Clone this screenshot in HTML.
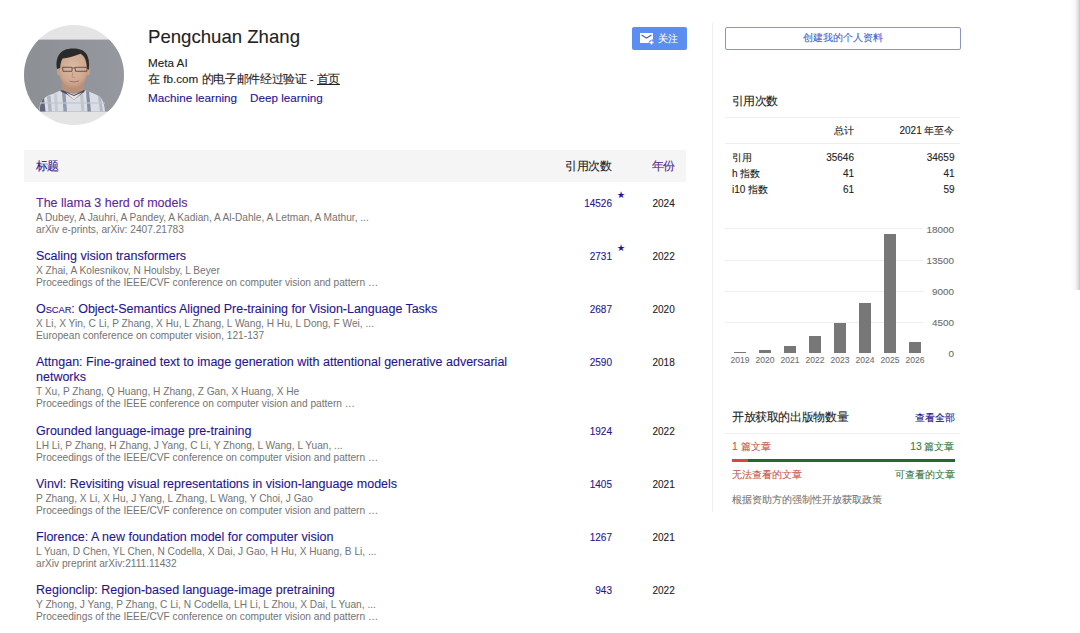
<!DOCTYPE html>
<html><head><meta charset="utf-8">
<style>
html,body{margin:0;padding:0;background:#fff;}
body{width:1080px;height:633px;overflow:hidden;position:relative;font-family:"Liberation Sans",sans-serif;color:#222;-webkit-text-stroke:0.1px currentColor;}
.a{position:absolute;white-space:nowrap;}
.lnk{color:#1f168f;}
.vis{color:#5c2896;}
.t{font-size:12.5px;line-height:15px;}
.sc{font-size:9.3px;}
.g{font-size:10.16px;line-height:12px;color:#737373;-webkit-text-stroke:0;}
.num{font-size:10px;line-height:12px;text-align:right;}
.yr{font-size:10px;line-height:12px;color:#222;}
.star{font-size:9px;line-height:10px;color:#1f168f;}
.ylab{font-size:9.9px;line-height:12px;color:#6c6c6c;text-align:right;}
.xlab{font-size:9.6px;line-height:12px;color:#707070;text-align:center;transform:scaleX(0.89);}
.rt{font-size:10px;line-height:12px;color:#222;}
</style></head><body>
<div class="a" style="left:23.6px;top:24.5px;width:100px;height:100px;border-radius:50%;overflow:hidden;">
<svg width="100" height="100" viewBox="0 0 100 100" style="display:block">
<defs><linearGradient id="bg" x1="0" y1="0" x2="1" y2="0"><stop offset="0" stop-color="#8c8f94"/><stop offset="1" stop-color="#95989e"/></linearGradient>
<radialGradient id="face" cx="0.5" cy="0.42" r="0.62"><stop offset="0" stop-color="#dcbaa4"/><stop offset="0.7" stop-color="#cfa78f"/><stop offset="1" stop-color="#b28a74"/></radialGradient></defs>
<rect width="100" height="100" fill="#e4e4e4"/>
<rect x="0" y="14.6" width="100" height="72" fill="url(#bg)"/>
<path d="M15 86.6 C15.5 78 18 72.5 27 69.5 C31 68 34 66.5 37 65.5 L50 69 L62 65.5 C66 67 70 68.5 73 70 C79 73 80.5 79 81 86.6 Z" fill="#dadde3"/>
<path d="M15.5 86.6 C16 80 17 76 20 73 L21.5 86.6 Z" fill="#5f677c"/>
<path d="M23 71.5 L24.5 86.6 L28 86.6 L26.5 70.5 Z" fill="#b0b6c4"/>
<path d="M30 69 L31 86.6 L34 86.6 L33 68 Z" fill="#c6cad4"/>
<path d="M38 67 L39.5 86.6 L43 86.6 L41.5 68 Z" fill="#9199ae"/>
<path d="M56 69 L57.5 86.6 L60.5 86.6 L59 68 Z" fill="#c0c5d0"/>
<path d="M62 66 L63.5 86.6 L67 86.6 L65 66.5 Z" fill="#848da3"/>
<path d="M74 71 L76 86.6 L79 86.6 L77 72.5 Z" fill="#b3b9c7"/>
<path d="M16 77 L81 77 L81 79 L16 79 Z" fill="#c3c7d1" opacity="0.6"/>
<rect x="38" y="53" width="22" height="15" fill="#b88f77"/>
<path d="M36 66 L44 70 L50 75 L56 70 L61 66 L60 65 L50 70 L38 65 Z" fill="#434b63"/>
<path d="M42 67.5 L50 75 L58 67.5 L50 71 Z" fill="#ebe4dc"/>
<ellipse cx="35.2" cy="46" rx="2.2" ry="4.5" fill="#c9a089"/>
<ellipse cx="63.8" cy="46" rx="2.2" ry="4.5" fill="#c9a089"/>
<path d="M34.5 40 C34.5 55 40 63.5 49.5 63.5 C59 63.5 64 55 64 40 C64 30 58 26.5 49.5 26.5 C41 26.5 34.5 30 34.5 40 Z" fill="url(#face)"/>
<path d="M33 44 C31 32 36 23.5 49 23.5 C61 23.5 66.5 29.5 64.8 45 L63 43.5 C62.5 35 60.5 31 56.5 28.8 C50 31.5 43 33 38.5 33.5 C37 36.5 36.2 40 36.2 43 Z" fill="#2b2a2a"/>
<path d="M38.5 42.3 H48 V46.3 H39 Z M51 42.3 H63.2 L62.8 46.3 H51.5 Z" fill="none" stroke="#4e3e38" stroke-width="0.8"/>
<path d="M48 43 L51 43" stroke="#4e3e38" stroke-width="0.7"/>
<path d="M45.5 56.2 Q50 57.8 55 56" stroke="#9e6e5c" stroke-width="0.9" fill="none"/>
<path d="M49 47 L48 52 L51 52.5" stroke="#b58a74" stroke-width="0.7" fill="none"/>
</svg>
</div>
<div class="a" style="left:148px;top:25.5px;font-size:18.6px;line-height:22px;color:#222;">Pengchuan Zhang</div>
<div class="a" style="left:148px;top:56px;font-size:11.7px;line-height:14px;color:#222;">Meta AI</div>
<div class="a" style="left:148px;top:72px;font-size:11.7px;line-height:14px;color:#222;">在 fb.com <span style="letter-spacing:-0.34px">的电子邮件经过验证</span> - <span style="text-decoration:underline;letter-spacing:-0.5px">首页</span></div>
<div class="a lnk" style="left:148px;top:91px;font-size:11.7px;line-height:14px;">Machine learning</div>
<div class="a lnk" style="left:250px;top:91px;font-size:11.7px;line-height:14px;">Deep learning</div>

<div class="a" style="left:632px;top:27px;width:55px;height:23px;background:#5b8ef0;border-radius:2px;"></div>
<svg class="a" style="left:639px;top:32px" width="16" height="13" viewBox="0 0 16 13">
<path d="M1 1 H14 V7.5 A4 4 0 0 0 9.5 11 H1 Z" fill="#fff"/>
<path d="M2.5 3 L7.5 6 L12.5 3" stroke="#4a60c0" stroke-width="1.1" fill="none"/>
<path d="M12.5 8.5 V12.5 M10.5 10.5 H14.5" stroke="#fff" stroke-width="1.3"/>
</svg>
<div class="a" style="left:658px;top:32px;font-size:9.8px;line-height:13px;color:#fff;">关注</div>

<div class="a" style="left:24px;top:150px;width:662px;height:32px;background:#f5f5f5;"></div>
<div class="a lnk" style="left:36px;top:159px;font-size:11.6px;line-height:14px;letter-spacing:-0.8px;">标题</div>
<div class="a" style="left:565px;top:159px;font-size:11.6px;line-height:14px;color:#222;letter-spacing:-0.4px;">引用次数</div>
<div class="a vis" style="left:652px;top:159px;font-size:11.6px;line-height:14px;letter-spacing:-1.5px;">年份</div>

<div class="a t vis" style="left:36px;top:196px">The llama 3 herd of models</div>
<div class="a g" style="left:36px;top:212px">A Dubey, A Jauhri, A Pandey, A Kadian, A Al-Dahle, A Letman, A Mathur, ...</div>
<div class="a g" style="left:36px;top:224px">arXiv e-prints, arXiv: 2407.21783</div>
<div class="a num lnk" style="left:552px;width:60px;top:198px">14526</div>
<div class="a star" style="left:617px;top:190px">★</div>
<div class="a yr" style="left:652.5px;top:198px">2024</div>
<div class="a t lnk" style="left:36px;top:249px">Scaling vision transformers</div>
<div class="a g" style="left:36px;top:265px">X Zhai, A Kolesnikov, N Houlsby, L Beyer</div>
<div class="a g" style="left:36px;top:277px">Proceedings of the IEEE/CVF conference on computer vision and pattern …</div>
<div class="a num lnk" style="left:552px;width:60px;top:251px">2731</div>
<div class="a star" style="left:617px;top:243px">★</div>
<div class="a yr" style="left:652.5px;top:251px">2022</div>
<div class="a t lnk" style="left:36px;top:302px"><span style="letter-spacing:-0.04px">O<span class="sc">SCAR</span>: Object-Semantics Aligned Pre-training for Vision-Language Tasks</span></div>
<div class="a g" style="left:36px;top:318px">X Li, X Yin, C Li, P Zhang, X Hu, L Zhang, L Wang, H Hu, L Dong, F Wei, ...</div>
<div class="a g" style="left:36px;top:330px">European conference on computer vision, 121-137</div>
<div class="a num lnk" style="left:552px;width:60px;top:304px">2687</div>
<div class="a yr" style="left:652.5px;top:304px">2020</div>
<div class="a t lnk" style="left:36px;top:355px">Attngan: Fine-grained text to image generation with attentional generative adversarial<br>networks</div>
<div class="a g" style="left:36px;top:386px">T Xu, P Zhang, Q Huang, H Zhang, Z Gan, X Huang, X He</div>
<div class="a g" style="left:36px;top:398px">Proceedings of the IEEE conference on computer vision and pattern …</div>
<div class="a num lnk" style="left:552px;width:60px;top:357px">2590</div>
<div class="a yr" style="left:652.5px;top:357px">2018</div>
<div class="a t lnk" style="left:36px;top:424px">Grounded language-image pre-training</div>
<div class="a g" style="left:36px;top:440px">LH Li, P Zhang, H Zhang, J Yang, C Li, Y Zhong, L Wang, L Yuan, ...</div>
<div class="a g" style="left:36px;top:452px">Proceedings of the IEEE/CVF conference on computer vision and pattern …</div>
<div class="a num lnk" style="left:552px;width:60px;top:426px">1924</div>
<div class="a yr" style="left:652.5px;top:426px">2022</div>
<div class="a t lnk" style="left:36px;top:477px">Vinvl: Revisiting visual representations in vision-language models</div>
<div class="a g" style="left:36px;top:493px">P Zhang, X Li, X Hu, J Yang, L Zhang, L Wang, Y Choi, J Gao</div>
<div class="a g" style="left:36px;top:505px">Proceedings of the IEEE/CVF conference on computer vision and pattern …</div>
<div class="a num lnk" style="left:552px;width:60px;top:479px">1405</div>
<div class="a yr" style="left:652.5px;top:479px">2021</div>
<div class="a t lnk" style="left:36px;top:530px">Florence: A new foundation model for computer vision</div>
<div class="a g" style="left:36px;top:546px">L Yuan, D Chen, YL Chen, N Codella, X Dai, J Gao, H Hu, X Huang, B Li, ...</div>
<div class="a g" style="left:36px;top:558px">arXiv preprint arXiv:2111.11432</div>
<div class="a num lnk" style="left:552px;width:60px;top:532px">1267</div>
<div class="a yr" style="left:652.5px;top:532px">2021</div>
<div class="a t lnk" style="left:36px;top:583px">Regionclip: Region-based language-image pretraining</div>
<div class="a g" style="left:36px;top:599px">Y Zhong, J Yang, P Zhang, C Li, N Codella, LH Li, L Zhou, X Dai, L Yuan, ...</div>
<div class="a g" style="left:36px;top:611px">Proceedings of the IEEE/CVF conference on computer vision and pattern …</div>
<div class="a num lnk" style="left:552px;width:60px;top:585px">943</div>
<div class="a yr" style="left:652.5px;top:585px">2022</div>

<div class="a" style="left:712px;top:23px;width:1px;height:489px;background:#efefef;"></div>

<div class="a" style="left:725px;top:27px;width:234px;height:21px;border:1px solid #8a95c6;border-radius:2px;"></div>
<div class="a" style="left:725px;top:31px;width:236px;text-align:center;font-size:9.7px;line-height:14px;color:#3f62d0;">创建我的个人资料</div>

<div class="a" style="left:731.5px;top:93.5px;font-size:11.6px;line-height:14px;color:#222;letter-spacing:-0.5px;">引用次数</div>
<div class="a" style="left:725px;top:117px;width:235px;height:1px;background:#eee"></div>
<div class="a" style="left:725px;top:142.5px;width:235px;height:1px;background:#eee"></div>
<div class="a rt" style="left:800px;width:54px;text-align:right;top:124.5px">总计</div>
<div class="a rt" style="left:860px;width:94.5px;text-align:right;top:124.5px">2021 年至今</div>
<div class="a rt" style="left:732px;top:152px">引用</div>
<div class="a rt" style="left:800px;width:54px;text-align:right;top:152px">35646</div>
<div class="a rt" style="left:860px;width:94.5px;text-align:right;top:152px">34659</div>
<div class="a rt" style="left:732px;top:168px">h 指数</div>
<div class="a rt" style="left:800px;width:54px;text-align:right;top:168px">41</div>
<div class="a rt" style="left:860px;width:94.5px;text-align:right;top:168px">41</div>
<div class="a rt" style="left:732px;top:184px">i10 指数</div>
<div class="a rt" style="left:800px;width:54px;text-align:right;top:184px">61</div>
<div class="a rt" style="left:860px;width:94.5px;text-align:right;top:184px">59</div>

<div class="a" style="left:725px;top:228.0px;width:198px;height:1px;background:#eee"></div>
<div class="a" style="left:725px;top:259.8px;width:198px;height:1px;background:#eee"></div>
<div class="a" style="left:725px;top:290.9px;width:198px;height:1px;background:#eee"></div>
<div class="a" style="left:725px;top:321.7px;width:198px;height:1px;background:#eee"></div>
<div class="a ylab" style="left:900px;width:54px;top:223.5px">18000</div>
<div class="a ylab" style="left:900px;width:54px;top:255.3px">13500</div>
<div class="a ylab" style="left:900px;width:54px;top:286.4px">9000</div>
<div class="a ylab" style="left:900px;width:54px;top:317.2px">4500</div>
<div class="a ylab" style="left:900px;width:54px;top:348.3px">0</div>
<div class="a" style="left:734.0px;top:352.1px;width:11.6px;height:1.2px;background:#777"></div>
<div class="a xlab" style="left:719.8px;width:40px;top:353.5px">2019</div>
<div class="a" style="left:759.2px;top:349.7px;width:11.6px;height:3.6px;background:#777"></div>
<div class="a xlab" style="left:745.0px;width:40px;top:353.5px">2020</div>
<div class="a" style="left:784.2px;top:346.0px;width:11.6px;height:7.3px;background:#777"></div>
<div class="a xlab" style="left:770.0px;width:40px;top:353.5px">2021</div>
<div class="a" style="left:809.4px;top:335.5px;width:11.6px;height:17.8px;background:#777"></div>
<div class="a xlab" style="left:795.2px;width:40px;top:353.5px">2022</div>
<div class="a" style="left:834.3px;top:322.7px;width:11.6px;height:30.6px;background:#777"></div>
<div class="a xlab" style="left:820.1px;width:40px;top:353.5px">2023</div>
<div class="a" style="left:859.1px;top:302.7px;width:11.6px;height:50.6px;background:#777"></div>
<div class="a xlab" style="left:844.9px;width:40px;top:353.5px">2024</div>
<div class="a" style="left:884.0px;top:233.9px;width:11.6px;height:119.4px;background:#777"></div>
<div class="a xlab" style="left:869.8px;width:40px;top:353.5px">2025</div>
<div class="a" style="left:909.0px;top:342.3px;width:11.6px;height:11.0px;background:#777"></div>
<div class="a xlab" style="left:894.8px;width:40px;top:353.5px">2026</div>

<div class="a" style="left:732px;top:410px;font-size:11.6px;line-height:14px;color:#222;letter-spacing:-0.38px;">开放获取的出版物数量</div>
<div class="a lnk" style="left:880px;width:74.5px;text-align:right;top:411px;font-size:10.3px;line-height:13px;">查看全部</div>
<div class="a" style="left:725px;top:433px;width:235px;height:1px;background:#eee"></div>
<div class="a" style="left:732px;top:439.6px;font-size:10.3px;line-height:13px;color:#c8574a;">1 篇文章</div>
<div class="a" style="left:860px;width:94.5px;text-align:right;top:439.6px;font-size:10.3px;line-height:13px;color:#3a7a40;">13 篇文章</div>
<div class="a" style="left:732px;top:458.9px;width:15.5px;height:3px;background:#d8473b"></div>
<div class="a" style="left:747.5px;top:458.9px;width:207px;height:3px;background:#236b2c"></div>
<div class="a" style="left:732px;top:468.3px;font-size:10.3px;line-height:13px;color:#c8574a;">无法查看的文章</div>
<div class="a" style="left:860px;width:94.5px;text-align:right;top:468.3px;font-size:10.3px;line-height:13px;color:#3a7a40;">可查看的文章</div>
<div class="a" style="left:732px;top:493px;font-size:10.3px;line-height:13px;color:#777;">根据资助方的强制性开放获取政策</div>

<div class="a" style="left:1070px;top:0;width:10px;height:289.5px;border-bottom-left-radius:2px;background:linear-gradient(to right,rgba(0,0,0,0),rgba(0,0,0,0.03) 50%,rgba(0,0,0,0.1) 75%,rgba(0,0,0,0.22))"></div>
</body></html>
